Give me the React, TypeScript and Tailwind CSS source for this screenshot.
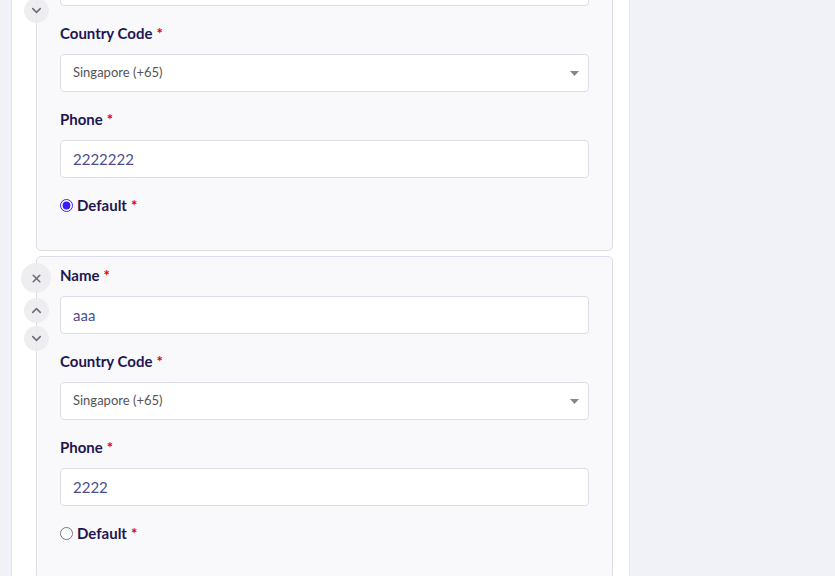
import { X, ChevronUp, ChevronDown } from 'lucide-react';

interface Contact {
  name: string;
  phone: string;
  isDefault: boolean;
}

const contacts: Contact[] = [
  { name: 'bbb', phone: '2222222', isDefault: true },
  { name: 'aaa', phone: '2222', isDefault: false },
];

function Label({ text }: { text: string }) {
  return (
    <label className="block h-5 text-[15px] leading-5 font-bold text-[#1f1650]">
      {text}
      <span className="ml-1 text-[#e00000]">*</span>
    </label>
  );
}

function TextInput({ value }: { value: string }) {
  return (
    <input
      readOnly
      value={value}
      className="mt-[11px] block h-[38px] w-full rounded-[4px] border border-[#dddde8] bg-white px-3 text-[15px] text-[#4e4f8c] outline-none"
    />
  );
}

function CountrySelect() {
  return (
    <div className="relative mt-[11px] h-[38px]">
      <select
        defaultValue="sg"
        className="block h-full w-full appearance-none rounded-[4px] border border-[#dddde8] bg-white px-3 text-[13px] text-[#555555] outline-none"
      >
        <option value="sg">Singapore (+65)</option>
        <option value="my">Malaysia (+60)</option>
      </select>
      {/* caret */}
      <svg
        className="pointer-events-none absolute right-[10px] top-[17px]"
        width="9"
        height="5"
        viewBox="0 0 9 5"
      >
        <path d="M0 0h9L4.5 5z" fill="#888888" />
      </svg>
    </div>
  );
}

function ContactCard({ contact, index }: { contact: Contact; index: number }) {
  return (
    <div className="relative rounded-[5px] border border-[#dcdce9] bg-[#f9f9fc] px-[23px] pt-[8px] pb-[35px]">
      {/* Row controls sitting on the left border */}
      <button className="absolute left-[-16px] top-[6px] flex h-[30px] w-[30px] items-center justify-center rounded-full bg-[#ececf0]/90 text-[#6e6e7c]">
        <X className="h-[13px] w-[13px]" strokeWidth={3} />
      </button>
      <button className="absolute left-[-13px] top-[41px] flex h-[25px] w-[25px] items-center justify-center rounded-full bg-[#ececf0]/90 text-[#6e6e7c]">
        <ChevronUp className="h-[15px] w-[15px]" strokeWidth={2.5} />
      </button>
      <button className="absolute left-[-13px] top-[69px] flex h-[25px] w-[25px] items-center justify-center rounded-full bg-[#ececf0]/90 text-[#6e6e7c]">
        <ChevronDown className="h-[15px] w-[15px]" strokeWidth={2.5} />
      </button>

      <div>
        <Label text="Name" />
        <TextInput value={contact.name} />
      </div>
      <div className="mt-[17px]">
        <Label text="Country Code" />
        <CountrySelect />
      </div>
      <div className="mt-[17px]">
        <Label text="Phone" />
        <TextInput value={contact.phone} />
      </div>
      <div className="mt-[17px] flex h-5 items-center">
        <input
          type="radio"
          name="default-contact"
          defaultChecked={contact.isDefault}
          id={`default-${index}`}
          className="m-0 h-[13px] w-[13px] accent-[#3b1cf5]"
        />
        <label
          htmlFor={`default-${index}`}
          className="ml-[4px] text-[15px] leading-5 font-bold text-[#1f1650]"
        >
          Default
          <span className="ml-1 text-[#e00000]">*</span>
        </label>
      </div>
    </div>
  );
}

export default function App() {
  return (
    <div
      className="h-[576px] overflow-hidden bg-[#f1f2f8]"
      style={{ fontFamily: '"Lato", "Liberation Sans", sans-serif' }}
    >
      <div className="ml-[11px] -mt-[72px] w-[619px] border-x border-[#e2e3ec] bg-white pl-6 pr-4 pb-10">
        <div className="flex flex-col gap-[5px]">
          {contacts.map((c, i) => (
            <ContactCard key={i} contact={c} index={i} />
          ))}
        </div>
      </div>
    </div>
  );
}
